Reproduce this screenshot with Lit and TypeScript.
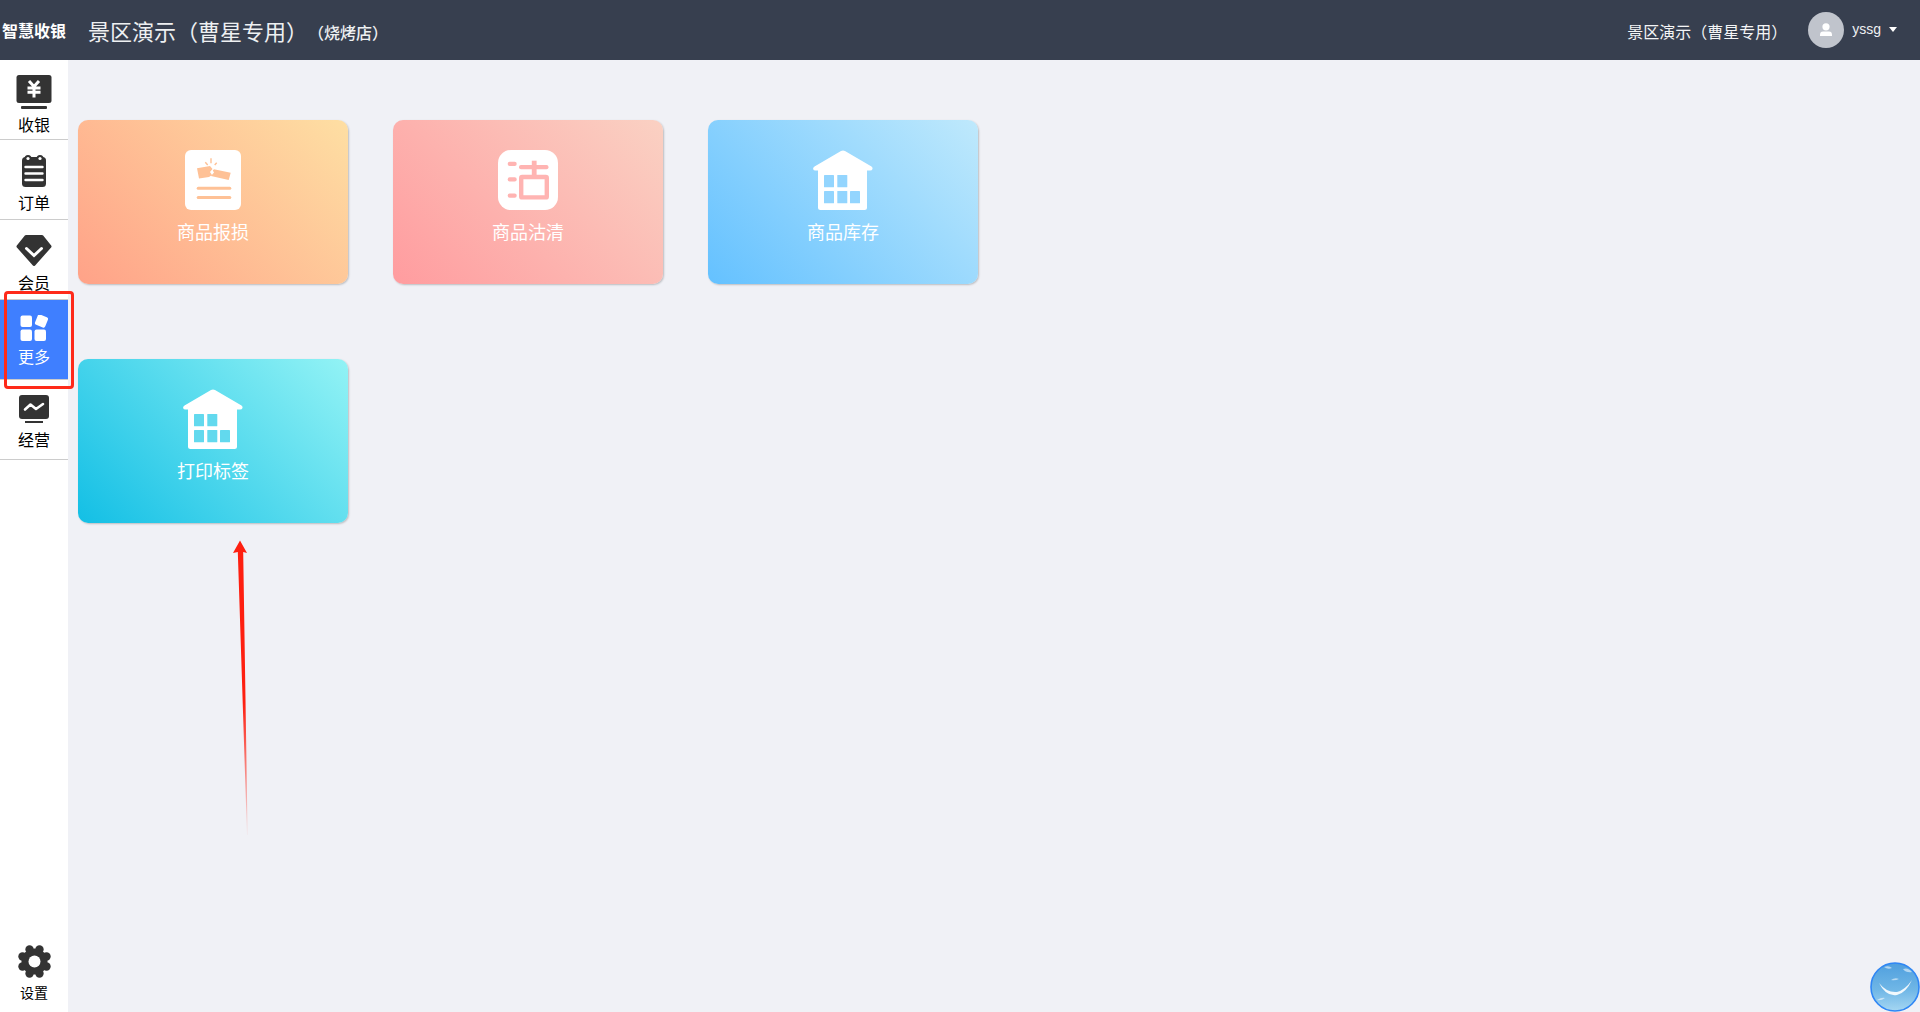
import { LitElement, html, css, svg } from "lit";
import { customElement } from "lit/decorators.js";

const INK = "#333333";

const navItems = [
  {
    label: "收银", cls: "m4", w: 36, h: 35,
    icon: svg`<rect x="0.5" y="0" width="35" height="28" rx="2.5" fill="${INK}"/>
      <rect x="5" y="31" width="26" height="3" rx="1" fill="${INK}"/>
      <path d="M13 6 L18 11.5 L23 6 M11.5 13 H24.5 M11.5 17.2 H24.5 M18 11.5 V22.5" fill="none" stroke="#fff" stroke-width="3"/>`,
  },
  {
    label: "订单", cls: "m5", w: 24, h: 32,
    icon: svg`<rect x="0" y="2" width="24" height="30" rx="3.5" fill="${INK}"/>
      <circle cx="6" cy="3.5" r="3.5" fill="${INK}"/><circle cx="18" cy="3.5" r="3.5" fill="${INK}"/>
      <circle cx="6" cy="3.5" r="1.6" fill="#fff"/><circle cx="18" cy="3.5" r="1.6" fill="#fff"/>
      <path d="M3.5 12 H20.5 M3.5 18.5 H20.5 M3.5 25 H20.5" stroke="#fff" stroke-width="2.4" stroke-linecap="round"/>`,
  },
  {
    label: "会员", cls: "m6", w: 36, h: 31,
    icon: svg`<path d="M10 1.5 H26 L34 11.5 L18 29.5 L2 11.5 Z" fill="${INK}" stroke="${INK}" stroke-width="3" stroke-linejoin="round"/>
      <path d="M10.5 13.5 L18 20.5 L25.5 13.5" fill="none" stroke="#fff" stroke-width="3" stroke-linecap="round"/>`,
  },
  {
    label: "更多", cls: "m5 on", w: 28, h: 26,
    icon: svg`<rect x="0.5" y="0.5" width="11.5" height="11.5" rx="2" fill="#fff"/>
      <rect x="16" y="0.5" width="11" height="11" rx="2" fill="#fff" transform="rotate(22 21.5 6)"/>
      <rect x="0.5" y="14.5" width="11.5" height="11.5" rx="2" fill="#fff"/>
      <rect x="14.5" y="14.5" width="11.5" height="11.5" rx="2" fill="#fff"/>`,
  },
  {
    label: "经营", cls: "m6", w: 30, h: 28,
    icon: svg`<rect x="0" y="0" width="30" height="24" rx="3" fill="${INK}"/>
      <rect x="6" y="26" width="18" height="2" fill="${INK}"/>
      <path d="M6 14.5 L11.5 9.5 L17 14 L24 9" fill="none" stroke="#fff" stroke-width="2.6" stroke-linecap="round" stroke-linejoin="round"/>`,
  },
];

const broken = (c: string) => svg`
  <rect width="56" height="60" rx="6" fill="#fff"/>
  <path d="M12 18.3 L25 16 L27.5 19 L25 22 L27 25 L24 27 L14 28.5 Z M29 19.3 L45.7 22.7 L43.7 30 L26 26 L29 22.5 L27.8 20.5 Z" fill="${c}"/>
  <path d="M26 8.3 V13.3 M20.3 12.3 L22.7 15 M31.7 12.7 L29.7 15" stroke="${c}" stroke-width="1.4"/>
  <rect x="11.7" y="36.7" width="34.6" height="3" rx="1.5" fill="${c}"/>
  <rect x="11.7" y="46" width="34.6" height="3" rx="1.5" fill="${c}"/>`;

const clean = (c: string) => svg`
  <rect width="60" height="60" rx="13" fill="#fff"/>
  <rect x="9.7" y="11.7" width="9" height="4.3" rx="2" fill="${c}"/>
  <rect x="9.7" y="27.2" width="9" height="4.3" rx="2" fill="${c}"/>
  <rect x="9.7" y="43.4" width="9" height="4.3" rx="2" fill="${c}"/>
  <rect x="21" y="15" width="29.5" height="4.2" rx="2" fill="${c}"/>
  <rect x="33.8" y="10.7" width="4.8" height="16" fill="${c}"/>
  <rect x="23.2" y="27" width="25.6" height="20.4" rx="1" fill="none" stroke="${c}" stroke-width="4.4"/>`;

const house = (c: string) => svg`
  <path d="M30 0.5 Q31 0.5 32 1 L58.5 16.5 Q60 17.5 59.5 19 Q59 20.5 57 20.5 L54 20.5 V57.5 Q54 60 51.5 60 H7.5 Q5 60 5 57.5 V20.5 H2.5 Q0.5 20.5 0.1 19 Q-0.2 17.5 1.5 16.5 L28 1 Q29 0.5 30 0.5 Z" fill="#fff"/>
  <rect x="11" y="25" width="10" height="12.3" rx="0.6" fill="${c}"/>
  <rect x="24.3" y="25" width="10" height="12.3" rx="0.6" fill="${c}"/>
  <rect x="11" y="41" width="10" height="12.3" rx="0.6" fill="${c}"/>
  <rect x="24.3" y="41" width="10" height="12.3" rx="0.6" fill="${c}"/>
  <rect x="37" y="41" width="10" height="12.3" rx="0.6" fill="${c}"/>`;

const cards = [
  { label: "商品报损", bg: "c1", w: 56, art: broken("#fec196") },
  { label: "商品沽清", bg: "c2", w: 60, art: clean("#ffb4b2") },
  { label: "商品库存", bg: "c3", w: 60, art: house("#93d5fe") },
  { label: "打印标签", bg: "c4", w: 60, art: house("#62d9ee") },
];

const gearLobes = [0, 45, 90, 135, 180, 225, 270, 315].map((a) => {
  const r = (a * Math.PI) / 180 + Math.PI / 8;
  return svg`<circle cx="${17.5 + 13 * Math.cos(r)}" cy="${17.5 + 13 * Math.sin(r)}" r="4.2" fill="${INK}"/>`;
});

@customElement("app-root")
export class AppRoot extends LitElement {
  static styles = css`
    :host {
      display: flex;
      flex-direction: column;
      position: relative;
      height: 100vh;
      overflow: hidden;
      background: #f0f1f6;
      font-family: "Noto Sans CJK SC", "Liberation Sans", sans-serif;
    }
    .top {
      flex: none;
      height: 60px;
      background: #373f4f;
      color: #fff;
      display: flex;
      align-items: center;
      padding: 0 23px 0 2px;
    }
    .brand { font-size: 16px; font-weight: 700; width: 86px; line-height: 24px; margin-top: -1px; }
    .title { font-size: 22px; line-height: 30px; color: #eef0f2; }
    .sub { font-size: 16px; line-height: 24px; color: #eef0f2; margin-top: 3px; font-weight: 500; }
    .spacer { flex: 1; }
    .org { font-size: 16px; line-height: 24px; margin-top: 1px; margin-right: 21px; color: #f4f5f6; }
    .avatar {
      width: 36px;
      height: 36px;
      border-radius: 50%;
      background: #c0c4cc;
      display: flex;
      align-items: center;
      justify-content: center;
    }
    .user {
      font-family: "Liberation Sans", sans-serif;
      font-size: 14px;
      color: #eef0f2;
      margin-left: 8px;
      margin-right: 8px;
      margin-top: -2px;
    }
    .caret {
      width: 0;
      height: 0;
      border-left: 4.5px solid transparent;
      border-right: 4.5px solid transparent;
      border-top: 5px solid #fff;
      margin-top: -2px;
    }
    .body { flex: 1; display: flex; min-height: 0; }
    .side {
      flex: none;
      width: 68px;
      background: #fff;
      display: flex;
      flex-direction: column;
    }
    .nav {
      box-sizing: border-box;
      height: 80px;
      padding-top: 15px;
      border-bottom: 1px solid #cccccc;
      display: flex;
      flex-direction: column;
      align-items: center;
      color: #000;
      font-size: 16px;
      line-height: 20px;
    }
    .nav svg { display: block; flex: none; }
    .m4 svg { margin-bottom: 4px; }
    .m5 svg { margin-bottom: 5px; }
    .m6 svg { margin-bottom: 6px; }
    .on { background: #3f7fff; color: #fff; }
    .settings {
      margin-top: auto;
      padding-bottom: 10px;
      display: flex;
      flex-direction: column;
      align-items: center;
      font-size: 14px;
      line-height: 20px;
      color: #000;
    }
    .settings svg { display: block; margin-bottom: 3px; }
    .main {
      flex: 1;
      padding: 60px 0 0 10px;
      display: grid;
      grid-template-columns: repeat(3, 315px);
      grid-auto-rows: 239px;
      align-content: start;
    }
    .card {
      box-sizing: border-box;
      width: 270px;
      height: 164px;
      border-radius: 10px;
      padding-top: 30px;
      display: flex;
      flex-direction: column;
      align-items: center;
      color: #fff;
      font-size: 18px;
      line-height: 24px;
      box-shadow: 1px 1px 2px rgba(0, 0, 0, 0.22);
    }
    .card svg { display: block; margin-bottom: 9px; overflow: visible; }
    .c1 { background: linear-gradient(45deg, #ffa288, #fedfa3); }
    .c2 { background: linear-gradient(45deg, #ff9c9f, #fad1c3); }
    .c3 { background: linear-gradient(45deg, #64c1ff, #bfe9fc); }
    .c4 { background: linear-gradient(45deg, #13bfe5, #93f3f5); }
    .mark {
      position: absolute;
      left: 4px;
      top: 291px;
      box-sizing: border-box;
      width: 70px;
      height: 98px;
      border: 3px solid #fe2a1a;
      border-radius: 4px;
    }
    .arrow { position: absolute; left: 230px; top: 535px; }
    .bubble { position: absolute; right: 0; bottom: 0; display: block; }
  `;

  render() {
    return html`
      <div class="top">
        <div class="brand">智慧收银</div>
        <div class="title">景区演示（曹星专用）</div>
        <div class="sub">（烧烤店）</div>
        <div class="spacer"></div>
        <div class="org">景区演示（曹星专用）</div>
        <div class="avatar">
          <svg width="14" height="14" viewBox="0 0 14 14">
            <circle cx="7" cy="3.8" r="3.6" fill="#fff"/>
            <path d="M1 12 Q1 8.6 4 8.6 H10 Q13 8.6 13 12 V13 H1 Z" fill="#fff"/>
          </svg>
        </div>
        <div class="user">yssg</div>
        <div class="caret"></div>
      </div>
      <div class="body">
        <div class="side">
          ${navItems.map(
            (n) => html`<div class="nav ${n.cls}">
              <svg width="${n.w}" height="${n.h}" viewBox="0 0 ${n.w} ${n.h}">${n.icon}</svg>
              <span>${n.label}</span>
            </div>`
          )}
          <div class="settings">
            <svg width="35" height="35" viewBox="0 0 35 35">
              ${gearLobes}
              <circle cx="17.5" cy="17.5" r="13" fill="${INK}"/>
              <circle cx="17.5" cy="17.5" r="6" fill="#fff"/>
            </svg>
            <span>设置</span>
          </div>
        </div>
        <div class="main">
          ${cards.map(
            (c) => html`<div class="card ${c.bg}">
              <svg width="${c.w}" height="60" viewBox="0 0 ${c.w} 60">${c.art}</svg>
              <span>${c.label}</span>
            </div>`
          )}
        </div>
      </div>
      <div class="mark"></div>
      <svg class="arrow" width="25" height="305" viewBox="0 0 25 305">
        <defs>
          <linearGradient id="fade" x1="0" y1="0" x2="0" y2="1">
            <stop offset="0.55" stop-color="#fe1f10"/>
            <stop offset="1" stop-color="#fe1f10" stop-opacity="0.05"/>
          </linearGradient>
        </defs>
        <path d="M10 5.5 L17 18 L13.2 17 L17.6 300 L17 300 L7.8 17 L3 18 Z" fill="url(#fade)"/>
      </svg>
      <svg class="bubble" width="50" height="50" viewBox="0 0 50 50">
        <defs>
          <linearGradient id="sky" x1="0" y1="0" x2="0" y2="1">
            <stop offset="0" stop-color="#4f9fde"/>
            <stop offset="0.55" stop-color="#6fb6e6"/>
            <stop offset="1" stop-color="#a5d6f2"/>
          </linearGradient>
        </defs>
        <circle cx="25" cy="25" r="24" fill="url(#sky)" stroke="#2f86f5" stroke-width="1.6"/>
        <path d="M9 21 Q16 35 27 33 Q36 31 42 18 Q35 28 27 30 Q17 31 9 21 Z" fill="#fff" opacity="0.9"/>
        <path d="M14 5 Q19 3 22 6 Q18 8 14 5 Z M33 7 Q38 5 42 10 Q36 11 33 7 Z M21 18 Q25 15 29 17 Q25 19 21 18 Z M7 38 Q12 35 15 36 Q11 39 7 38 Z" fill="#fff" opacity="0.55"/>
      </svg>
    `;
  }
}
